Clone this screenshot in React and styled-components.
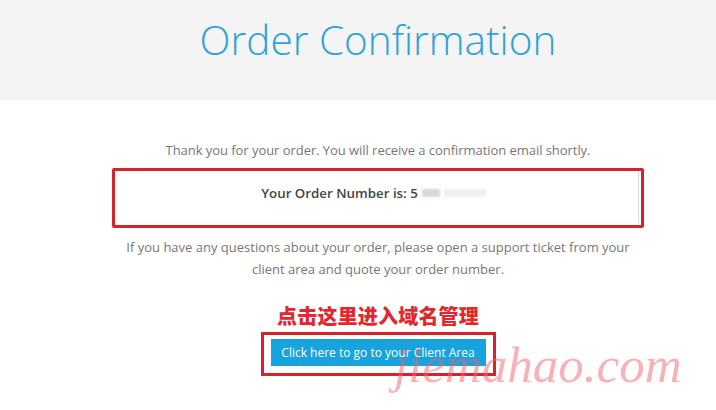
import styled, { createGlobalStyle } from 'styled-components'

const GlobalStyle = createGlobalStyle`
  html, body {
    margin: 0;
    padding: 0;
    background: #fff;
  }
  body {
    font-family: 'Open Sans', 'Liberation Sans', sans-serif;
    width: 716px;
    height: 410px;
    overflow: hidden;
  }
`

export default function App() {
  return (
    <Page>
      <GlobalStyle />
      <Header>
        <Title>Order Confirmation</Title>
      </Header>

      <Content>
        <Lead>Thank you for your order. You will receive a confirmation email shortly.</Lead>

        <Highlight>
          <Well>
            <OrderNumber>Your Order Number is: 5</OrderNumber>
            <Blur $w={18} $tone='#d8d8d8' />
            <Blur $w={42} $tone='#f0f0f0' />
          </Well>
        </Highlight>

        <Note>
          If you have any questions about your order, please open a support ticket from your client
          area and quote your order number.
        </Note>

        <Hint>点击这里进入域名管理</Hint>

        <ButtonFrame>
          <ClientButton>Click here to go to your Client Area</ClientButton>
        </ButtonFrame>
      </Content>

      <Watermark>jiemahao.com</Watermark>
    </Page>
  )
}

const Page = styled.div`
  position: relative;
  width: 716px;
  height: 410px;
  overflow: hidden;
`

const Header = styled.header`
  height: 100px;
  background: #f4f4f4;
  display: flex;
  justify-content: center;
  padding: 14px 0 0 40px;
  box-sizing: border-box;
`

const Title = styled.h1`
  margin: 0;
  font-weight: 300;
  font-size: 40.5px;
  line-height: 52px;
  color: #2ea3d6;
`

const Content = styled.main`
  display: flex;
  flex-direction: column;
  align-items: center;
  padding: 40px 0 0 40px;
  color: #777;
  font-size: 13px;
`

const Lead = styled.p`
  margin: 0;
  line-height: 20px;
  height: 20px;
  letter-spacing: -0.05px;
`

const Highlight = styled.div`
  margin-top: 8px;
  width: 532px;
  height: 60px;
  box-sizing: border-box;
  border: 3px solid #d7222c;
  border-radius: 2px;
  padding: 0 2px 0 0;
`

const Well = styled.div`
  height: 100%;
  box-sizing: border-box;
  border-right: 1px solid #d6d6d6;
  background: #fff;
  display: flex;
  align-items: center;
  justify-content: center;
  gap: 4px;
  padding: 0 6px 10px 0;
`

const OrderNumber = styled.span`
  font-weight: 600;
  font-size: 13.3px;
  color: #444;
`

const Blur = styled.span`
  display: inline-block;
  width: ${(p) => p.$w}px;
  height: 8px;
  background: ${(p) => p.$tone};
  filter: blur(1px);
`

const Note = styled.p`
  margin: 8px 0 0;
  width: 514px;
  text-align: center;
  line-height: 22px;
`

const Hint = styled.div`
  margin-top: 24px;
  font-family: 'Noto Sans CJK SC', sans-serif;
  font-weight: 900;
  font-size: 20px;
  line-height: 24px;
  color: #e4262e;
  letter-spacing: 0.2px;
`

const ButtonFrame = styled.div`
  margin-top: 4px;
  width: 235px;
  height: 44px;
  box-sizing: border-box;
  border: 3px solid #d7222c;
  display: flex;
  justify-content: center;
  padding-top: 4px;
`

const ClientButton = styled.button`
  width: 215px;
  height: 27px;
  border: none;
  border-radius: 0;
  background: #16a3de;
  color: #fff;
  font-family: 'Open Sans', 'Liberation Sans', sans-serif;
  font-size: 12px;
  padding: 0;
`

const Watermark = styled.div`
  position: absolute;
  left: 394px;
  top: 334px;
  font-family: 'Liberation Serif', serif;
  font-style: italic;
  font-size: 51px;
  line-height: 62px;
  color: rgba(240, 100, 112, 0.5);
  pointer-events: none;
`
